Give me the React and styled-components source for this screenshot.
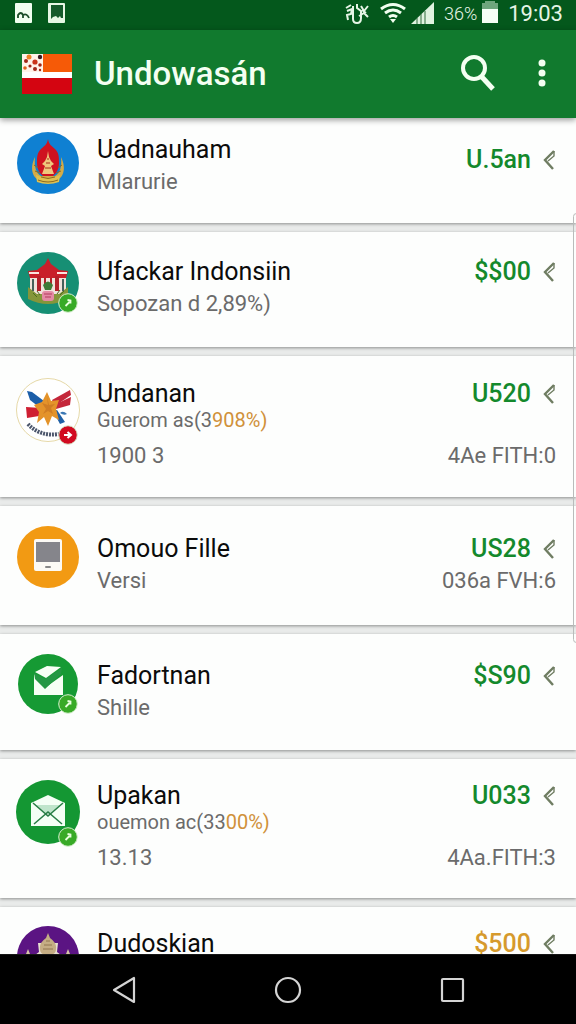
import React from "react";
import styled, { createGlobalStyle } from "styled-components";

const GlobalStyle = createGlobalStyle`
  * { box-sizing: border-box; }
  body { margin: 0; background: #e9ebea; font-family: Roboto, "Liberation Sans", sans-serif; }
  h1, h2, p, ul { margin: 0; padding: 0; font-weight: 400; }
  button { border: 0; padding: 0; background: none; color: inherit; font: inherit; cursor: pointer; }
  svg { display: block; }
`;

const Screen = styled.div`
  height: 100vh;
  display: flex;
  flex-direction: column;
  overflow: hidden;
`;

const StatusBar = styled.div`
  height: 30px;
  flex: none;
  display: flex;
  justify-content: space-between;
  padding: 0 13px 0 14px;
  background: #04581c;
  color: #e6f5e6;
`;

const StatusGroup = styled.div`
  display: flex;
  align-items: center;
  gap: ${(p) => p.$gap}px;
  height: 26px;
`;

const MuteSlot = styled.span`
  margin-right: 6px;
`;

const Percent = styled.span`
  font-size: 18px;
  font-weight: 300;
  margin-left: 4px;
`;

const Clock = styled.span`
  font-size: 22px;
  margin-left: 5px;
`;

const AppBar = styled.header`
  height: 88px;
  flex: none;
  position: relative;
  display: flex;
  align-items: center;
  padding: 0 26px 0 21px;
  background: #117a2e;
  color: #f4fff2;
  box-shadow: 0 2px 6px rgba(0, 0, 0, 0.4);
  z-index: 1;
`;

const AppTitle = styled.h1`
  flex: 1;
  margin-left: 22px;
  font-size: 33px;
  line-height: 40px;
  font-weight: 500;
`;

const BarButton = styled.button`
  margin-left: 38px;
`;

const ListArea = styled.main`
  position: relative;
  flex: 1;
  min-height: 0;
  overflow: hidden;
`;

const List = styled.ul`
  list-style: none;
  display: flex;
  flex-direction: column;
  gap: 9px;
`;

const ScrollThumb = styled.div`
  position: absolute;
  right: -4px;
  top: 95px;
  width: 7px;
  height: 430px;
  border: 1px solid #b9bcbb;
  border-radius: 4px;
`;

const Card = styled.li`
  display: flex;
  gap: 17px;
  padding: ${(p) => p.$top}px 20px ${(p) => p.$bottom}px 16px;
  background: #fdfefd;
  box-shadow: 0 1px 3px rgba(0, 0, 0, 0.4);
`;

const Avatar = styled.div`
  position: relative;
  flex: none;
  width: 64px;
  height: 64px;
`;

const BadgeSlot = styled.span`
  position: absolute;
  right: 2px;
  bottom: ${(p) => (p.$raised ? 2 : -3)}px;
`;

const Body = styled.div`
  flex: 1;
  min-width: 0;
  display: flex;
  justify-content: space-between;
  padding-top: ${(p) => p.$inset}px;
`;

const Info = styled.div`
  min-width: 0;
`;

const Figures = styled.div`
  display: flex;
  flex-direction: column;
  justify-content: space-between;
  padding-top: ${(p) => p.$drop || 0}px;
`;

const Name = styled.h2`
  font-size: 25px;
  line-height: 32px;
  color: #0b0b0b;
  white-space: nowrap;
`;

const Amount = styled.p`
  display: flex;
  align-items: center;
  justify-content: flex-end;
  gap: 12px;
  font-size: 25px;
  line-height: 32px;
  font-weight: 500;
  color: ${(p) => (p.$pending ? "#d69a2c" : "#14892c")};
`;

const Detail = styled.p`
  font-size: 22px;
  line-height: 32px;
  color: #6b6b6b;
  white-space: nowrap;
`;

const Note = styled.p`
  margin-bottom: 10px;
  font-size: 20px;
  line-height: 20px;
  color: #6b6b6b;
  white-space: nowrap;
`;

const Rate = styled.span`
  color: #d0913a;
`;

const Meta = styled(Detail)`
  text-align: right;
`;

const NavBar = styled.nav`
  flex: none;
  height: 70px;
  display: grid;
  grid-template-columns: repeat(3, 164px);
  justify-content: center;
  align-items: center;
  background: #000;
  border-top: 1px solid #161616;
`;

const NavButton = styled.button`
  display: flex;
  justify-content: center;
`;

function ChevronLeft() {
  return (
    <svg width="13" height="20" viewBox="0 0 13 20" fill="none" stroke="#6f7d62">
      <path d="M11 1 2 10l8 9" strokeWidth="2.400" />
      <path d="M11 1v5L5 11" strokeWidth="1.400" />
    </svg>
  );
}

function Badge({ color }) {
  return (
    <svg width="20" height="20" viewBox="0 0 20 20">
      <circle cx="10" cy="10" r="9.300" fill={color} stroke="#d8efd0" strokeWidth="1" />
      {color === "#d10a20" ? (
        <path d="M6 10h7M9.500 7 13 10l-3.500 3" stroke="#fff" strokeWidth="2" fill="none" />
      ) : (
        <path d="m7.500 13 4.500-4.500M9.500 7l3 .5v3" stroke="#e9ffe0" strokeWidth="1.800" fill="none" />
      )}
    </svg>
  );
}

const emblems = {
  flame: (
    <>
      <circle cx="32" cy="32" r="31" fill="#0f80d2" />
      <path d="M19 26c-6 12-2 22 6 24h14c8-2 12-12 6-24 1 10-1 16-6 19H25c-5-3-7-9-6-19Z" fill="#d3ab48" />
      <path d="M32 8c1 6 4 7 7 10 4 4 4 8 4 14s-3 11-6 13H27c-3-2-6-7-6-13s0-10 4-14c3-3 6-4 7-10Z" fill="#cf1220" />
      <path d="m32 20 1 6 2 4 3 3-3 2 3 8H26l3-8-3-2 3-3 2-4Z" fill="#efc77c" />
      <path d="M20 44q12 6 24 0l-1 7q-11 4-22 0Z" fill="#dfc04f" />
      <path d="M25 46q7 3 14 0M22 49q10 4 20 0M18 34l4 3M46 34l-4 3M19 40l5 2M45 40l-5 2" stroke="#8d6a23" fill="none" />
      <path d="M30 32h4M29 37h6M31 28h2" stroke="#a62a1b" />
    </>
  ),
  temple: (
    <>
      <circle cx="32" cy="32" r="31" fill="#168f74" />
      <path d="M14 22h36v24q-18 11-36 0Z" fill="#f1e3dc" />
      <path d="M12 36v12q20 10 40 0V36l-9 7H21Z" fill="#85963a" />
      <path d="m32 7 3 6 8 6 9 1-2 7H14l-2-7 9-1 8-6Z" fill="#c91f2a" />
      <path d="M13 22h10M41 22h10" stroke="#fbe3de" strokeWidth="2" />
      <path d="M23 25v15M41 25v15" stroke="#b3202a" strokeWidth="4" />
      <path d="M29 27v9M35 27v9" stroke="#b3202a" strokeWidth="2" />
      <path d="M17 28v12M47 28v12" stroke="#48605a" strokeWidth="2" />
      <path d="M27 34q5-7 10 0l-2 5h-6Z" fill="#3e7a37" />
      <rect x="26" y="40" width="12" height="10" rx="3" fill="#e48aa4" />
      <path d="M28 43h8M29 46h6" stroke="#b23b5d" />
      <path d="M17 42l4 4M44 44l4-4M21 40l3 4M41 43l3-4" stroke="#4a6b22" />
    </>
  ),
  star: (
    <>
      <circle cx="32" cy="32" r="31.500" fill="#fff" stroke="#e6d9a8" />
      <path d="m11 13 5 1 12 9-5 6-9-7Z" fill="#1c5ea8" />
      <path d="m10 29 15 1-2 8-12 2Z" fill="#cf1f33" />
      <path d="m54 12 1 5-16 11-3-6Z" fill="#c4273a" />
      <path d="m55 19-1 8-14 4v-5Z" fill="#c4273a" />
      <path d="m37 33 4-1 8 12-5 2Z" fill="#1f5fa5" />
      <path d="m31 14 4 9 8-1-3 9 3 11-7-4-4 10-4-9-7 6 2-11-5-7 8-3Z" fill="#e4932a" />
      <path d="m31 19 1 8-6-2 4 6-3 5 5-3 5 3-2-6 4-4-6 1Z" fill="#b8641c" opacity=".45" />
      <path d="M44 35q3-3 7 1-3 2-7-1" fill="#3c78b4" />
      <path d="M12 46q12 13 31 10" stroke="#4c566c" strokeWidth="4" strokeDasharray="2 1" fill="none" />
    </>
  ),
  device: (
    <>
      <circle cx="32" cy="32" r="31" fill="#f29a13" />
      <rect x="18" y="14" width="28" height="32" rx="2" fill="#fcfaf5" />
      <rect x="20" y="17" width="24" height="20" fill="#85858b" />
      <rect x="29" y="41" width="6" height="2" rx="1" fill="#888" />
    </>
  ),
  check: (
    <>
      <circle cx="32" cy="32" r="30" fill="#169a34" />
      <path d="M18 22 30 35l17-12v20H18Z" fill="#f7fff5" />
      <path d="m18 21 11 6 17-11-1 6-16 15-10-10Z" fill="#259744" />
      <path d="m19 20 12-6 14 1-15 11Z" fill="#f7fff5" />
    </>
  ),
  envelope: (
    <>
      <circle cx="32" cy="32" r="32" fill="#149733" />
      <path d="m32 15 17 8v23H15V23Z" fill="#f4fff5" />
      <path d="m19 25 13 10 13-10Z" fill="#bfe5cb" />
      <path d="m17 23 15 13 15-13M18 44l14-12 14 12" stroke="#277d45" strokeWidth="1.500" fill="none" />
    </>
  ),
  shrine: (
    <>
      <circle cx="32" cy="32" r="31" fill="#5b1483" />
      <path d="M22 18h20l-1 9 4 3v14H19V30l4-3Z" fill="#e8dfd0" />
      <path d="m32 8 2 5q7 5 6 11 0 6-8 6t-8-6q-1-6 6-11Z" fill="#c5ad84" />
      <path d="m12 24 2 5v14h-4V29ZM52 24l2 5v14h-4V29Z" fill="#d7c6a6" />
      <path d="M30 16h4M28 20h8M27 24h10" stroke="#927751" />
    </>
  ),
};

const GREEN = "#38aa27";
const RED = "#d10a20";

const accounts = [
  { emblem: "flame", name: "Uadnauham", detail: "Mlarurie", amount: "U.5an", top: 13, inset: 3, bottom: 25, drop: 10 },
  { emblem: "temple", badge: GREEN, raised: true, name: "Ufackar Indonsiin", detail: "Sopozan d 2,89%)", amount: "$$00", top: 19, inset: 5, bottom: 27 },
  { emblem: "star", badge: RED, name: "Undanan", note: "Guerom as(3", rate: "908%)", detail: "1900 3", meta: "4Ae FITH:0", amount: "U520", top: 22, inset: 0, bottom: 25 },
  { emblem: "device", name: "Omouo Fille", detail: "Versi", meta: "036a FVH:6", amount: "US28", top: 19, inset: 8, bottom: 28 },
  { emblem: "check", badge: GREEN, raised: true, name: "Fadortnan", detail: "Shille", amount: "$S90", top: 18, inset: 8, bottom: 26 },
  { emblem: "envelope", badge: GREEN, name: "Upakan", note: "ouemon ac(33", rate: "00%)", detail: "13.13", meta: "4Aa.FITH:3", amount: "U033", top: 21, inset: 0, bottom: 24 },
  { emblem: "shrine", name: "Dudoskian", amount: "$500", pending: true, top: 18, inset: 3, bottom: 26 },
];

function AccountCard({ item }) {
  return (
    <Card $top={item.top} $bottom={item.bottom}>
      <Avatar>
        <svg width="64" height="64" viewBox="0 0 64 64">{emblems[item.emblem]}</svg>
        {item.badge && <BadgeSlot $raised={item.raised}><Badge color={item.badge} /></BadgeSlot>}
      </Avatar>
      <Body $inset={item.inset}>
        <Info>
          <Name>{item.name}</Name>
          {item.note && <Note>{item.note}<Rate>{item.rate}</Rate></Note>}
          {item.detail && <Detail>{item.detail}</Detail>}
        </Info>
        <Figures $drop={item.drop}>
          <Amount $pending={item.pending}>{item.amount}<ChevronLeft /></Amount>
          {item.meta && <Meta>{item.meta}</Meta>}
        </Figures>
      </Body>
    </Card>
  );
}

export default function App() {
  return (
    <Screen>
      <GlobalStyle />
      <StatusBar>
        <StatusGroup $gap={14}>
          <svg width="19" height="22" viewBox="0 0 19 22">
            <rect x="1" y="1" width="17" height="20" rx="1" fill="#f1fff0" />
            <path d="M4 16v-3q3-4 5 0v3M9 13q4-2 6 3" stroke="#1a4d27" strokeWidth="1.800" fill="none" />
          </svg>
          <svg width="19" height="22" viewBox="0 0 19 22">
            <rect x="1" y="1" width="17" height="20" rx="1" fill="#e6f7e4" />
            <path d="M4 3h12v13h-2l-1-2-2 2-2-2-3 1-2 2Z" fill="#145a2a" />
          </svg>
        </StatusGroup>
        <StatusGroup $gap={5}>
          <MuteSlot>
            <svg width="25" height="22" viewBox="0 0 25 22" fill="none" stroke="#e6f5e6" strokeWidth="2">
              <path d="M9 4v13q0 4 4 4t4-5V9l-4-3V2M2 6l5-3M3 9l5-2-1 5-4 1 1 5M17 4l3 5 4-5M15 14l5-3 4 4M18 8l4 3" />
            </svg>
          </MuteSlot>
          <svg width="26" height="22" viewBox="0 0 26 22" fill="none" stroke="#f1fff0" strokeWidth="3">
            <path d="M1 7q12-9 24 0M5 11q8-6 16 0M9 15q4-3 8 0" />
            <path d="m13 21-3-4h6Z" fill="#f1fff0" stroke="none" />
          </svg>
          <svg width="24" height="22" viewBox="0 0 24 22">
            <path d="M0 22 23 0v22Z" fill="#e0f2e0" />
            <path d="M6 16v6M10 12v10M14 9v13" stroke="#2e6b3b" />
          </svg>
          <Percent>36%</Percent>
          <svg width="16" height="26" viewBox="0 0 16 26">
            <path d="M3 1h10v2h3v7H0V3h3Z" fill="#6fa67c" />
            <path d="M0 9h16v14H0Z" fill="#f6fff5" />
          </svg>
          <Clock>19:03</Clock>
        </StatusGroup>
      </StatusBar>
      <AppBar>
        <svg width="51" height="42" viewBox="0 0 51 42">
          <path d="M1 1h50v18H1Z" fill="#f65a07" />
          <path d="M1 1h21v19H1Z" fill="#fff3ea" />
          <path d="M1 19h50v6H1Z" fill="#fff" />
          <path d="M1 25h50v16H1Z" fill="#d40511" />
          <g fill="#a12618">
            <circle cx="8" cy="4" r="2.500" fill="#ee8126" /><circle cx="19" cy="4" r="2.200" fill="#3b1a22" />
            <circle cx="5" cy="8" r="2" /><circle cx="14" cy="9" r="2.600" fill="#c9341a" />
            <circle cx="4" cy="15" r="1.800" fill="#e0601c" /><circle cx="9" cy="13" r="1.600" />
            <circle cx="14" cy="16" r="2" /><circle cx="19" cy="12" r="1.800" /><circle cx="19" cy="17" r="1.200" />
          </g>
        </svg>
        <AppTitle>Undowasán</AppTitle>
        <BarButton aria-label="Search">
          <svg width="36" height="38" viewBox="0 0 36 38" fill="none" stroke="#f4fff2">
            <circle cx="14" cy="13" r="11" strokeWidth="4" />
            <path d="m21 21 12 13" strokeWidth="5" />
          </svg>
        </BarButton>
        <BarButton aria-label="More options">
          <svg width="16" height="30" viewBox="0 0 16 30" fill="#f4fff2">
            <circle cx="8" cy="4" r="3.500" /><circle cx="8" cy="14" r="3.500" /><circle cx="8" cy="24" r="3.500" />
          </svg>
        </BarButton>
      </AppBar>
      <ListArea>
        <List>
          {accounts.map((item) => <AccountCard key={item.name} item={item} />)}
        </List>
        <ScrollThumb />
      </ListArea>
      <NavBar>
        <NavButton aria-label="Back">
          <svg width="28" height="28" viewBox="0 0 28 28" fill="none" stroke="#d4d4d4" strokeWidth="2.200" strokeLinejoin="round"><path d="M24 2v24L4 14Z" /></svg>
        </NavButton>
        <NavButton aria-label="Home">
          <svg width="28" height="28" viewBox="0 0 28 28" fill="none" stroke="#d4d4d4" strokeWidth="2.200"><circle cx="14" cy="14" r="12" /></svg>
        </NavButton>
        <NavButton aria-label="Recent apps">
          <svg width="28" height="28" viewBox="0 0 28 28" fill="none" stroke="#d4d4d4" strokeWidth="2.200"><rect x="4" y="3" width="21" height="22" rx="1" /></svg>
        </NavButton>
      </NavBar>
    </Screen>
  );
}
